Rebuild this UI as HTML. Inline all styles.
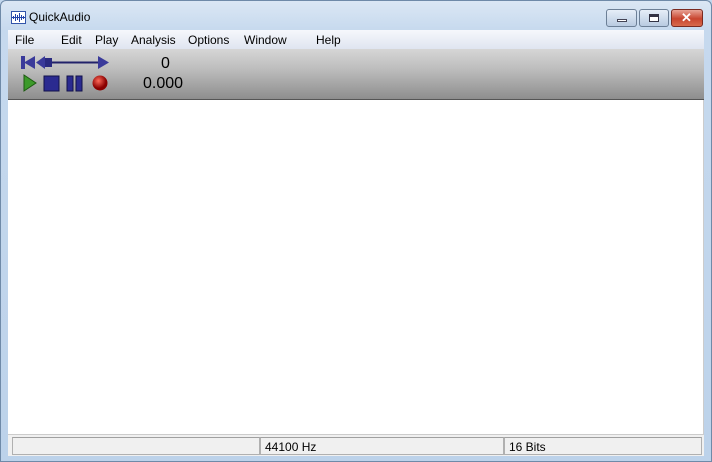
<!DOCTYPE html>
<html><head><style>
*{margin:0;padding:0;box-sizing:border-box}
body{width:712px;height:462px;overflow:hidden;font-family:"Liberation Sans",sans-serif;font-size:12px;background:#c3d8ee}
.win{position:absolute;left:0;top:0;width:712px;height:462px;background:linear-gradient(#dbe7f4,#c6d9ee 30px,#bcd2ea);border:1px solid #6f8aa8;border-radius:6px 6px 0 0}
.title{position:absolute;left:28px;top:9px;font-size:12px;color:#000}
.icon{position:absolute;left:10px;top:10px;width:15px;height:13px;background:#fff;border:1px solid #35a}
.btn{position:absolute;top:8px;height:18px;border:1px solid #6c7f96;border-radius:3px;background:linear-gradient(#e6eef8,#b9cbe1)}
.menu{position:absolute;left:7px;top:29px;width:696px;height:19px;background:linear-gradient(#f6f8fc,#dfe5f0)}
.menu span{position:absolute;top:3px;font-size:12px}
.tool{position:absolute;left:7px;top:48px;width:696px;height:51px;background:linear-gradient(#d6d6d6,#bdbdbd 40%,#8e8e8e);border-bottom:1px solid #555}
.client{position:absolute;left:7px;top:99px;width:696px;height:334px;background:#fff;border-right:1px solid #ccc}
.status{position:absolute;left:7px;top:433px;width:696px;height:22px;background:#f0f0f0;border-top:1px solid #ccc}
.pane{position:absolute;top:2px;height:18px;border:1px solid #b0b0b0;border-top-color:#a0a0a0;font-size:12px;padding:2px 4px}
</style></head><body>
<div class="win">
<div class="icon"><svg width="13" height="11" viewBox="0 0 13 11"><g stroke="#24a" stroke-width="1"><path d="M1.5 4v3M3.5 2v7M5.5 3v5M7.5 1v9M9.5 3v5M11.5 4v3"/><path d="M0 5.5h13"/></g></svg></div>
<div class="title">QuickAudio</div>
<div class="btn" style="left:605px;width:31px"><div style="position:absolute;left:10px;top:9px;width:10px;height:3px;background:#fff;border:1px solid #445"></div></div>
<div class="btn" style="left:638px;width:30px"><div style="position:absolute;left:9px;top:4px;width:10px;height:8px;border:1px solid #334;background:#fff;box-shadow:inset 0 2px 0 #334"></div></div>
<div class="btn" style="left:670px;width:32px;border-color:#7a2a20;background:linear-gradient(#e8a395,#c8452f 55%,#d86a4c)"><div style="position:absolute;left:9px;top:0px;color:#fff;font-weight:bold;font-size:13px">✕</div></div>
<div class="menu">
<span style="left:7px">File</span><span style="left:53px">Edit</span><span style="left:87px">Play</span><span style="left:123px">Analysis</span><span style="left:180px">Options</span><span style="left:236px">Window</span><span style="left:308px">Help</span>
</div>
<div class="tool">
<svg width="110" height="50" style="position:absolute;left:0;top:0">
<rect x="13" y="7" width="4" height="13" fill="#3a3a9a"/>
<path d="M16 13.5L27 7v13z" fill="#3a3a9a"/>
<path d="M28 13.5L37 7v13z" fill="#3a3a9a"/>
<rect x="37" y="9" width="7" height="9" fill="#2a2a80"/>
<rect x="44" y="12.5" width="48" height="2" fill="#22226a"/>
<path d="M90 7l11 6.5-11 6.5z" fill="#3a3a9a"/>
<path d="M16 26l12 8-12 8z" fill="#3c9a2a" stroke="#1c5a10" stroke-width="1"/>
<rect x="36" y="27" width="15" height="15" fill="#2a2a90" stroke="#11114a"/>
<rect x="59" y="27" width="6" height="15" fill="#2a2a90" stroke="#11114a"/>
<rect x="68" y="27" width="6" height="15" fill="#2a2a90" stroke="#11114a"/>
<defs><radialGradient id="r" cx="0.4" cy="0.35"><stop offset="0" stop-color="#ff6a5a"/><stop offset="1" stop-color="#8a0000"/></radialGradient></defs>
<circle cx="92" cy="34" r="7.5" fill="url(#r)"/>
</svg>
<div style="position:absolute;left:153px;top:6px;font-size:16px">0</div>
<div style="position:absolute;left:135px;top:26px;font-size:16px">0.000</div>
</div>
<div class="client"></div>
<div class="status">
<div class="pane" style="left:4px;width:248px"></div>
<div class="pane" style="left:252px;width:244px">44100 Hz</div>
<div class="pane" style="left:496px;width:198px">16 Bits</div>
</div>
</div>
</body></html>
